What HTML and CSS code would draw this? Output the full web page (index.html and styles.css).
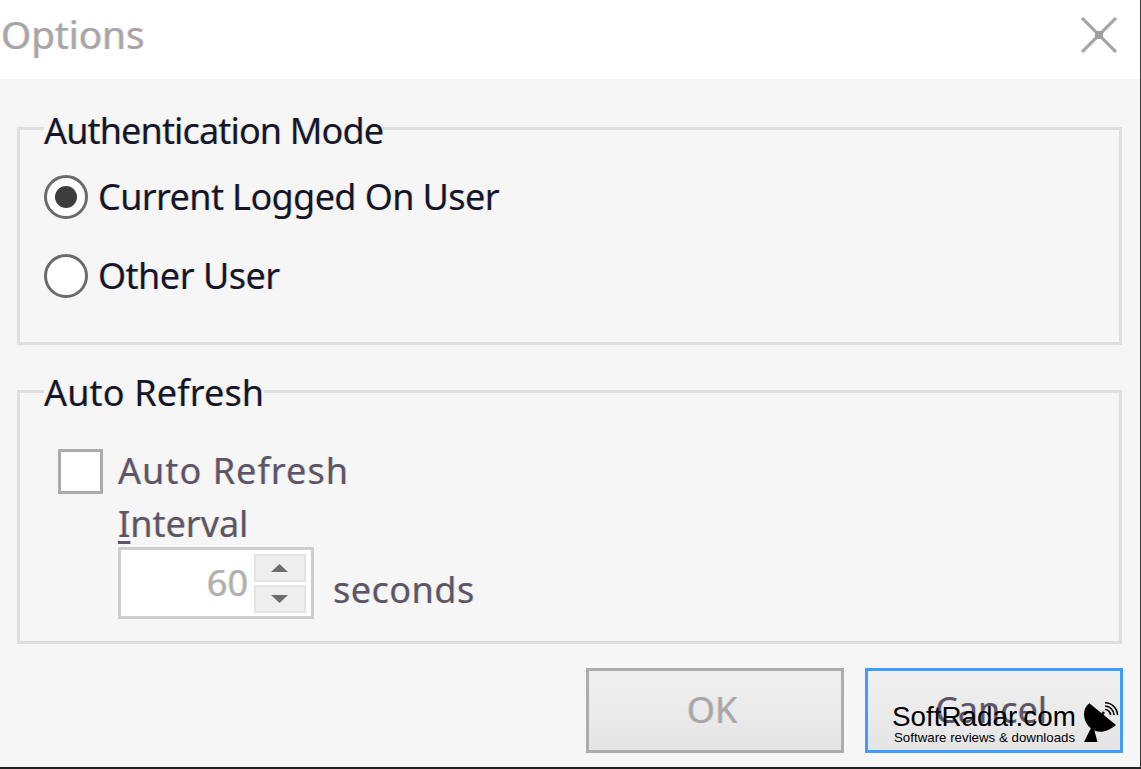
FILE: index.html
```html
<!DOCTYPE html>
<html lang="en">
<head>
<meta charset="utf-8">
<title>Options</title>
<link rel="stylesheet" href="styles.css">
</head>
<body>
<div class="window">
  <header class="titlebar">
    <span class="title">Options</span>
    <svg class="close" width="36" height="36" viewBox="0 0 36 36" aria-hidden="true">
      <path d="M1 1 L35 35 M35 1 L1 35" stroke="#a6a6a6" stroke-width="3.2" fill="none"/>
      <rect x="14" y="14" width="8" height="8" fill="#a0a0a0"/>
    </svg>
  </header>
  <main class="panel">
    <fieldset class="group group-auth">
      <legend class="legend-auth">Authentication Mode</legend>
      <div class="radio-row">
        <span class="radio checked"></span>
        <span class="label label-current">Current Logged On User</span>
      </div>
      <div class="radio-row">
        <span class="radio"></span>
        <span class="label label-other">Other User</span>
      </div>
    </fieldset>
    <fieldset class="group group-refresh">
      <legend class="legend-refresh">Auto Refresh</legend>
      <div class="check-row">
        <span class="checkbox"></span>
        <span class="label muted label-auto">Auto Refresh</span>
      </div>
      <div class="interval">
        <span class="label muted"><span class="mnemonic">I</span>nterval</span>
        <div class="spin-row">
          <div class="spin">
            <span class="spin-value">60</span>
            <div class="spin-buttons">
              <span class="spin-btn"><svg width="20" height="10" viewBox="0 0 20 10"><path d="M1 9 H18 L9.5 1 Z" fill="#6e6e6e"/></svg></span>
              <span class="spin-btn"><svg width="20" height="10" viewBox="0 0 20 10"><path d="M1 1 H18 L9.5 9 Z" fill="#6e6e6e"/></svg></span>
            </div>
          </div>
          <span class="label muted label-seconds">seconds</span>
        </div>
      </div>
    </fieldset>
    <div class="actions">
      <button class="btn btn-ok" type="button">OK</button>
      <button class="btn btn-cancel" type="button">Cancel</button>
    </div>
  </main>
  <div class="watermark">
    <div class="wm-text">
      <div class="wm-name">SoftRadar.com</div>
      <div class="wm-sub">Software reviews &amp; downloads</div>
    </div>
    <svg class="wm-dish" width="36" height="41" viewBox="0 0 36 41" aria-hidden="true">
      <path d="M6.3 1.3 C0 6 -0.5 15 4 22 C9 30 20 34 33 23 Z" fill="#000"/>
      <path d="M8 26 L1 40 H14.5 L11 27 Z" fill="#000"/>
      <path d="M17 15 L21 10" stroke="#000" stroke-width="2.6"/>
      <path d="M22 0.8 A12.5 12.5 0 0 1 34.5 13 M22 4 A9.2 9.2 0 0 1 31 13 M22 7.5 A5.6 5.6 0 0 1 27.5 13" stroke="#000" stroke-width="1.6" fill="none"/>
    </svg>
  </div>
</div>
</body>
</html>
```

FILE: styles.css
```css
* { box-sizing: border-box; }
html, body { margin: 0; padding: 0; background: #f6f6f6; }
.window {
  position: relative;
  width: 1141px;
  height: 769px;
  display: flex;
  flex-direction: column;
  font-family: "Noto Sans", "Open Sans", sans-serif;
  font-size: 36px;
  color: #14142a;
  border-right: 1px solid #3a3a3a;
  border-bottom: 2px solid #222;
  overflow: hidden;
  text-shadow: -0.7px 0 rgba(255, 170, 60, 0.4), 0.7px 0 rgba(60, 170, 255, 0.4);
}
.titlebar {
  height: 79px;
  flex: none;
  background: #fff;
  display: flex;
  align-items: center;
  justify-content: space-between;
  padding: 0 23px 8px 1px;
}
.title { color: #a9a4a8; font-size: 38.6px; line-height: 50px; margin-bottom: 4px; }
.close { display: block; margin-bottom: 2px; }
.panel {
  flex: 1;
  padding: 0 18px 0 17px;
  display: flex;
  flex-direction: column;
  background: #f6f6f6;
}
.group {
  margin: 0;
  min-width: 0;
  border: 3px solid #dedede;
  padding: 0 0 0 24px;
}
.group legend {
  padding: 0;
  line-height: 44px;
  color: #14142a;
}
.group .legend-auth { letter-spacing: -0.85px; padding-top: 6px; }
.group .legend-refresh { letter-spacing: 0.15px; padding-top: 4px; }
.group-auth { margin-top: 24px; height: 242px; }
.group-refresh { margin-top: 22px; height: 277px; }
.radio-row {
  display: flex;
  align-items: center;
  gap: 10px;
  height: 44px;
  margin-bottom: 35px;
}
.group-auth .radio-row:first-of-type { margin-top: 22px; }
.radio {
  width: 44px;
  height: 44px;
  border-radius: 50%;
  border: 3px solid #6b6b6b;
  background: #fff;
  flex: none;
  display: flex;
  align-items: center;
  justify-content: center;
}
.radio.checked::after {
  content: "";
  width: 22px;
  height: 22px;
  border-radius: 50%;
  background: #3d3d3d;
}
.label { line-height: 44px; white-space: nowrap; }
.label-current { letter-spacing: -0.6px; }
.label-other { letter-spacing: -0.5px; }
.muted { color: #5d5468; }
.label-auto { letter-spacing: 1.05px; }
.label-seconds { letter-spacing: 0.5px; margin-top: 14px; }
.mnemonic { text-decoration: underline; text-decoration-thickness: 3px; text-underline-offset: 4px; }
.check-row {
  display: flex;
  align-items: center;
  gap: 15px;
  margin-left: 14px;
  margin-top: 34px;
  height: 44px;
}
.checkbox {
  width: 45px;
  height: 45px;
  border: 3px solid #ababab;
  background: #fff;
  flex: none;
}
.interval { margin-left: 74px; margin-top: 9px; }
.interval > .label { display: block; line-height: 44px; height: 44px; }
.spin-row { display: flex; align-items: center; gap: 19px; margin-top: 1px; }
.spin {
  width: 196px;
  height: 72px;
  border: 3px solid #cdcdcd;
  background: #fff;
  display: flex;
  justify-content: flex-end;
  align-items: center;
  padding-right: 5px;
}
.spin-value { color: #b0b0b0; margin-right: 6px; line-height: 44px; }
.spin-buttons { display: flex; flex-direction: column; gap: 3px; width: 52px; }
.spin-btn {
  height: 28px;
  background: #eeeeee;
  border: 2px solid #e4e4e4;
  display: flex;
  align-items: center;
  justify-content: center;
}
.actions { display: flex; justify-content: flex-end; gap: 21px; margin-top: 24px; margin-right: -1px; }
.btn {
  width: 258px;
  height: 85px;
  background: linear-gradient(#f0f0f0, #e5e5e5);
  font: inherit;
  padding: 0 6px 2px 0;
  text-shadow: inherit;
}
.btn-ok { border: 3px solid #adadad; color: #a9a6a8; }
.btn-cancel { border: 3px solid #3f9dff; color: #5d5468; }
.watermark {
  position: absolute;
  left: 892px;
  top: 700px;
  display: flex;
  gap: 7px;
  color: #000;
  font-family: "Liberation Sans", Arial, sans-serif;
  text-shadow: none;
}
.wm-text { padding-top: 1px; }
.wm-name { font-size: 27.8px; line-height: 31px; }
.wm-sub { font-size: 13.3px; line-height: 14px; margin-left: 2px; margin-top: -1px; }
.wm-dish { display: block; margin-top: 2px; }
```
